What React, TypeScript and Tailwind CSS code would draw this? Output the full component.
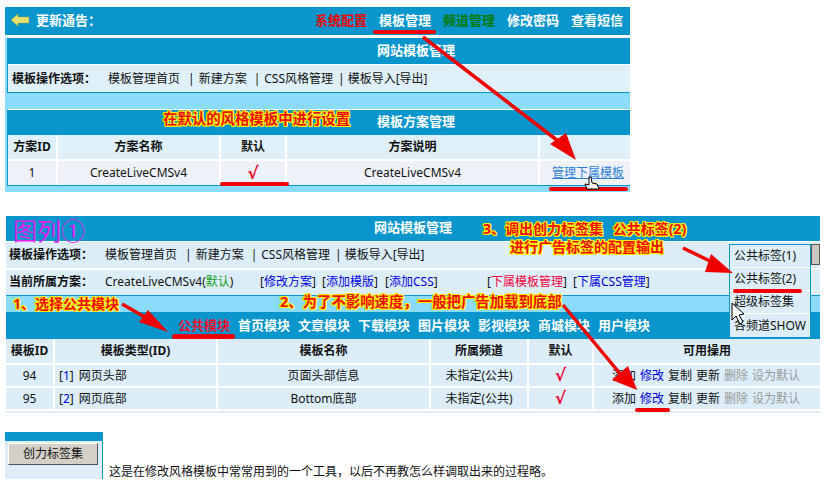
import React from 'react';

const glow = "[text-shadow:1px_0_0_#ffee00,-1px_0_0_#ffee00,0_1px_0_#ffee00,0_-1px_0_#ffee00,1px_1px_0_#ffee00,-1px_-1px_0_#ffee00,1px_-1px_0_#ffee00,-1px_1px_0_#ffee00]";

function Arrow({ d, head }: { d: string; head: string }) {
  return (
    <>
      <path d={d} stroke="#f00000" strokeWidth="3.5" fill="none" />
      <polygon points={head} fill="#f00000" />
    </>
  );
}

function Mark({ className }: { className: string }) {
  return <div className={`absolute bg-[#f00000] rounded-full ${className}`} />;
}

function Note({ className, children }: { className: string; children: React.ReactNode }) {
  return (
    <div className={`absolute whitespace-nowrap font-bold leading-[16px] text-[#f01000] ${glow} ${className}`}>
      {children}
    </div>
  );
}

function Check() {
  return <span className="text-[17px] font-bold leading-none text-[#f0002a] font-['DejaVu_Sans',sans-serif]">√</span>;
}

function OptionLinks() {
  return (
    <>
      <span>模板管理首页</span>
      <span className="ml-[8px] mr-[4px]">|</span>
      <span>新建方案</span>
      <span className="ml-[7px] mr-[4px]">|</span>
      <span>CSS风格管理</span>
      <span className="ml-[5px] mr-[3px]">|</span>
      <span>模板导入[导出]</span>
    </>
  );
}

function Ops() {
  return (
    <div className="flex gap-[4px] pl-[18px]">
      <span>添加</span>
      <span className="text-[#0000e0]">修改</span>
      <span>复制</span>
      <span>更新</span>
      <span className="text-[#999999]">删除</span>
      <span className="text-[#999999]">设为默认</span>
    </div>
  );
}

function ModuleRow({ id, type, typeName, name }: { id: string; type: string; typeName: string; name: string }) {
  return (
    <div className="flex h-[23px] items-center border-b-2 border-white text-center">
      <div className="w-[49px] border-r-2 border-white h-full flex items-center justify-center">{id}</div>
      <div className="w-[163px] border-r-2 border-white h-full flex items-center pl-[4px]">
        <span>[<span className="text-[#0000e0]">{type}</span>]</span>
        <span className="ml-[5px]">{typeName}</span>
      </div>
      <div className="w-[213px] border-r-2 border-white h-full flex items-center justify-center">{name}</div>
      <div className="w-[98px] border-r-2 border-white h-full flex items-center justify-center">未指定(公共)</div>
      <div className="w-[65px] border-r-2 border-white h-full flex items-center justify-center"><Check /></div>
      <div className="flex-1"><Ops /></div>
    </div>
  );
}

export default function App() {
  return (
    <div className="relative w-[826px] h-[500px] overflow-hidden bg-white text-[12px] leading-[16px] text-[#111] font-['Noto_Sans','Noto_Sans_CJK_SC',sans-serif]">
      {/* top panel */}
      <div className="pt-[7px] pl-[5px] w-[630px]">
        <div className="bg-[#8adcfa] h-[185px] flex flex-col">
          <div className="h-[28px] bg-[#0a95cd] flex items-center text-[13px] font-bold text-white pb-[2px]">
            <svg width="18" height="12" viewBox="0 0 18 12" className="ml-[6px] mr-[7px]">
              <path d="M0 6 L7 0 L7 3 L18 3 L18 9 L7 9 L7 12 Z" fill="#e8e070" stroke="#b0a830" strokeWidth="0.5" />
            </svg>
            <span>更新通告：</span>
            <div className="ml-auto mr-[7px] flex gap-[12px] whitespace-nowrap">
              <span className="text-[#f00000]">系统配置</span>
              <span>模板管理</span>
              <span className="text-[#067a06]">频道管理</span>
              <span>修改密码</span>
              <span>查看短信</span>
            </div>
          </div>
          <div className="h-[3px] bg-white" />
          <div className="ml-[2px] border-l border-[#0a95cd] border-b bg-[#e0f0f8]">
            <div className="h-[26px] bg-[#0a95cd] text-white font-bold text-[13px] flex items-center justify-center pl-[194px] pb-[3px]">网站模板管理</div>
            <div className="h-[1px] bg-white" />
            <div className="h-[27px] flex items-center pl-[4px] whitespace-pre">
              <span className="font-bold w-[96px]">模板操作选项：</span>
              <OptionLinks />
            </div>
          </div>
          <div className="h-[16px]" />
          <div className="ml-[2px] border-t border-t-white border-l border-l-[#0a95cd] border-b border-b-[#0a95cd] bg-[#eef2f8]">
            <div className="h-[25px] bg-[#0a95cd] text-white font-bold text-[13px] flex items-center justify-center pl-[194px] pb-[4px]">模板方案管理</div>
            <div className="h-[26px] flex bg-[#e0f0f8] font-bold text-center items-center border-b-2 border-white">
              <div className="w-[50px] h-full flex items-center justify-center border-r-2 border-white">方案ID</div>
              <div className="w-[163px] h-full flex items-center justify-center border-r-2 border-white">方案名称</div>
              <div className="w-[66px] h-full flex items-center justify-center border-r-2 border-white">默认</div>
              <div className="w-[253px] h-full flex items-center justify-center border-r-2 border-white">方案说明</div>
              <div className="flex-1" />
            </div>
            <div className="h-[24px] flex text-center items-center">
              <div className="w-[50px] h-full flex items-center justify-center border-r-2 border-white">1</div>
              <div className="w-[163px] h-full flex items-center justify-center border-r-2 border-white">CreateLiveCMSv4</div>
              <div className="w-[66px] h-full flex items-center justify-center border-r-2 border-white"><Check /></div>
              <div className="w-[253px] h-full flex items-center justify-center border-r-2 border-white">CreateLiveCMSv4</div>
              <div className="flex-1 text-[#2f7fd8] underline pl-[12px] text-left">管理下属模板</div>
            </div>
          </div>
        </div>
      </div>

      {/* second panel */}
      <div className="pt-[24px] pl-[6px] w-[820px]">
        <div className="h-[25px] bg-[#0a95cd] text-white font-bold text-[13px] flex items-center justify-center pb-[4px]">
          网站模板管理
        </div>
        <div className="h-[1px] bg-white" />
        <div className="h-[28px] bg-[#dcedf8] flex items-center pl-[3px] border-b-2 border-white">
          <span className="font-bold w-[96px]">模板操作选项：</span>
          <OptionLinks />
        </div>
        <div className="h-[25px] bg-[#dcedf8] flex items-center pl-[3px] pb-[1px] whitespace-nowrap">
          <span className="font-bold w-[96px]">当前所属方案：</span>
          <span className="w-[155px]">CreateLiveCMSv4(<span className="text-[#18a018]">默认</span>)</span>
          <span className="w-[62px]">[<span className="text-[#0000e0]">修改方案</span>]</span>
          <span className="w-[63px]">[<span className="text-[#0000e0]">添加模版</span>]</span>
          <span className="w-[102px]">[<span className="text-[#0000e0]">添加CSS</span>]</span>
          <span className="w-[86px]">[<span className="text-[#f0003c]">下属模板管理</span>]</span>
          <span>[<span className="text-[#0000e0]">下属CSS管理</span>]</span>
        </div>
        <div className="h-[18px] bg-[#8adcfa] border-y border-[#0a95cd]" />
        <div className="h-[26px] bg-[#0a95cd] text-white font-bold text-[13px] flex items-center gap-[8px] pl-[172px] pb-[2px]">
          <span className="text-[#f0102a]">公共模块</span>
          <span>首页模块</span>
          <span>文章模块</span>
          <span>下载模块</span>
          <span>图片模块</span>
          <span>影视模块</span>
          <span>商城模块</span>
          <span>用户模块</span>
        </div>
        <div className="bg-[#dcedf8]">
          <div className="flex h-[26px] items-center font-bold border-b-2 border-white text-center">
            <div className="w-[49px] border-r-2 border-white h-full flex items-center justify-center">模板ID</div>
            <div className="w-[163px] border-r-2 border-white h-full flex items-center justify-center">模板类型(ID)</div>
            <div className="w-[213px] border-r-2 border-white h-full flex items-center justify-center">模板名称</div>
            <div className="w-[98px] border-r-2 border-white h-full flex items-center justify-center">所属频道</div>
            <div className="w-[65px] border-r-2 border-white h-full flex items-center justify-center">默认</div>
            <div className="flex-1">可用操用</div>
          </div>
          <ModuleRow id="94" type="1" typeName="网页头部" name="页面头部信息" />
          <ModuleRow id="95" type="2" typeName="网页底部" name="Bottom底部" />
          <div className="h-[2px]" />
        </div>
      </div>

      {/* tag tool */}
      <div className="mt-[19px] ml-[5px] flex items-end">
        <div className="w-[97px] h-[47px] bg-[#dcedf8]">
          <div className="h-[9px] bg-[#0a95cd]" />
          <div className="mt-[2px] ml-[3px] w-[90px] h-[22px] bg-[#d4d0c8] border border-t-white border-l-white border-r-[#555] border-b-[#555] flex items-center justify-center">
            创力标签集
          </div>
        </div>
        <div className="w-[1px] h-[47px] bg-[#0a95cd]" />
        <div className="ml-[6px] whitespace-nowrap leading-[14px]">这是在修改风格模板中常常用到的一个工具，以后不再教怎么样调取出来的过程略。</div>
      </div>

      {/* dropdown menu */}
      <div className="absolute left-[811px] top-[244px] w-[9px] h-[21px] bg-[#c8c8c0] border border-[#555]" />
      <div className="absolute left-[729px] top-[244px] w-[82px] h-[94px] bg-[#dcedf8] border border-[#0a95cd]">
        <div className="h-[23px] flex items-center border-b border-white pl-[4px]">公共标签(1)</div>
        <div className="h-[23px] flex items-center border-b border-white pl-[4px]">公共标签(2)</div>
        <div className="h-[23px] flex items-center border-b border-white pl-[4px]">超级标签集</div>
        <div className="h-[23px] flex items-center pl-[4px] whitespace-nowrap">各频道SHOW</div>
      </div>

      {/* annotations */}
      <Note className="left-[163px] top-[111px] text-[14.4px]">在默认的风格模板中进行设置</Note>
      <div className="absolute left-[13px] top-[216px] text-[24px] leading-[30px] text-[#e020f0]">图列①</div>
      <Note className="left-[483px] top-[221px] text-[14px]">3、调出创力标签集<span className="ml-[6px]"> 公共标签(2)</span></Note>
      <Note className="left-[510px] top-[239px] text-[14px]">进行广告标签的配置输出</Note>
      <Note className="left-[13px] top-[296px] text-[14px]">1、选择公共模块</Note>
      <Note className="left-[280px] top-[294px] text-[14.4px]">2、为了不影响速度，一般把广告加载到底部</Note>

      <Mark className="left-[373px] top-[30px] w-[63px] h-[4px]" />
      <Mark className="left-[220px] top-[182px] w-[69px] h-[4px]" />
      <Mark className="left-[549px] top-[187px] w-[79px] h-[4px]" />
      <Mark className="left-[172px] top-[334px] w-[63px] h-[5px]" />
      <Mark className="left-[733px] top-[289px] w-[69px] h-[4px]" />
      <Mark className="left-[635px] top-[408px] w-[35px] h-[4px]" />

      <svg className="absolute left-0 top-0 pointer-events-none" width="826" height="500" viewBox="0 0 826 500">
        <Arrow d="M423 37 L558 141" head="576,160 550,144 566,133" />
        <Arrow d="M122 304 L150 320" head="168,332 139,322 148,310" />
        <Arrow d="M683 248 L712 262" head="733,273 705,272 711,254" />
        <Arrow d="M563 305 L622 376" head="637,390 612,380 628,366" />
        {/* hand cursor */}
        <path d="M589 177 L591 177 L592 183 L597 184 L599 189 L587 189 L585 184 L589 185 Z" fill="#fff" stroke="#000" strokeWidth="1" />
        {/* arrow cursor */}
        <path d="M732 303 L732 320 L736 316 L740 324 L743 322 L739 315 L744 314 Z" fill="#fff" stroke="#000" strokeWidth="1" />
      </svg>
    </div>
  );
}
